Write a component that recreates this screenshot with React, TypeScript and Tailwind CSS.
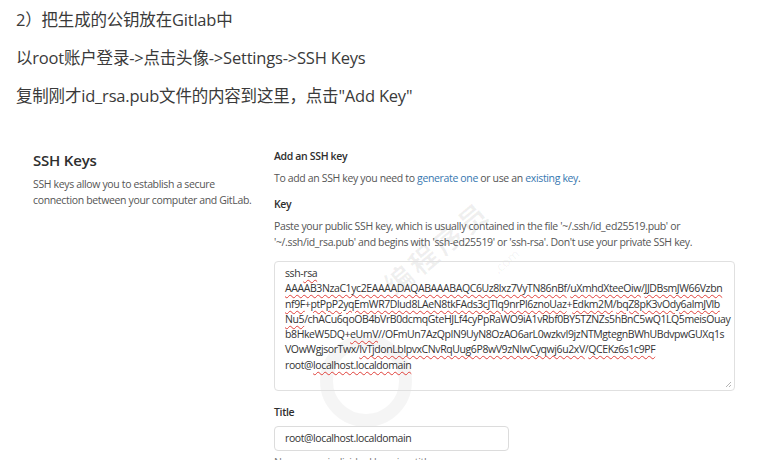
import React from "react";

const W = ({ children }: { children: React.ReactNode }) => (
  <span className="underline decoration-wavy decoration-[#e0403a] decoration-[1px] underline-offset-[2px]">{children}</span>
);

export default function App() {
  return (
    <div className="w-[760px] h-[472px] bg-white overflow-hidden font-['Open_Sans','Noto_Sans_CJK_SC',sans-serif]">
      <div className="h-[460px] overflow-hidden relative">
        <div className="pl-[16px] pt-[1px] text-[16.5px] leading-[38px] tracking-[-0.2px] text-[#3a3a3a]">
          <p>2）把生成的公钥放在Gitlab中</p>
          <p>以root账户登录-&gt;点击头像-&gt;Settings-&gt;SSH Keys</p>
          <p>复制刚才id_rsa.pub文件的内容到这里，点击"Add Key"</p>
        </div>

        {/* watermark */}
        <div className="absolute left-[320px] top-[335px] w-[92px] h-[92px] rounded-full border-[13px] border-[#000]/[0.04] pointer-events-none" />
        <div className="absolute left-[388px] top-[268px] rotate-[-40deg] origin-left text-[28px] font-bold text-[#000]/[0.06] tracking-[4px] whitespace-nowrap pointer-events-none select-none">
          编程序员
        </div>
        <div className="absolute left-[492px] top-[252px] rotate-[-40deg] text-[13px] text-[#000]/[0.06] whitespace-nowrap pointer-events-none select-none">
          .com
        </div>

        <div className="relative flex mt-[33px] tracking-[-0.35px]">
          <div className="pl-[33px] w-[274px] shrink-0">
            <h2 className="text-[15px] leading-[24px] font-semibold text-[#2e2e2e] tracking-[-0.2px]">SSH Keys</h2>
            <p className="text-[10.5px] leading-[16px] text-[#555] mt-[4px] whitespace-nowrap">
              SSH keys allow you to establish a secure
              <br />
              connection between your computer and GitLab.
            </p>
          </div>
          <div className="w-[461px] text-[10.5px] text-[#555]">
            <div className="font-semibold text-[#2e2e2e] leading-[16px]">Add an SSH key</div>
            <div className="leading-[16px] mt-[6px]">
              To add an SSH key you need to <span className="text-[#3777b0]">generate one</span> or use an{" "}
              <span className="text-[#3777b0]">existing key</span>.
            </div>
            <div className="font-semibold text-[#2e2e2e] leading-[16px] mt-[10px]">Key</div>
            <div className="leading-[16px] mt-[6px] whitespace-nowrap">
              Paste your public SSH key, which is usually contained in the file '~/.ssh/id_ed25519.pub' or
              <br />
              '~/.ssh/id_rsa.pub' and begins with 'ssh-ed25519' or 'ssh-rsa'. Don't use your private SSH key.
            </div>
            <div className="relative mt-[11px] h-[130px] border border-[#e0e0e0] rounded-[4px] px-[10px] pt-[4px] text-[10.5px] tracking-[-0.4px] leading-[15.3px] text-[#333] whitespace-nowrap overflow-hidden">
              <div>ssh-<W>rsa</W></div>
              <div><W>AAAAB3NzaC1yc2EAAAADAQABAAABAQC6Uz8lxz7VyTN86nBf</W>/<W>uXmhdXteeOiw</W>/<W>JJDBsmJW66Vzbn</W></div>
              <div><W>nf9F</W>+<W>ptPpP2yqEmWR7Dlud8LAeN8tkFAds3cJTlq9nrPl6znoUaz</W>+<W>Edkm2M</W>/<W>bqZ8pK3vOdy6almJVlb</W></div>
              <div><W>Nu5</W>/chACu6qoOB4bVrB0dcmqGteHJLf4cyPpRaWO9iA1vRbf0BY5TZNZs5hBnC5wQ1LQ5meisOuay</div>
              <div>b8HkeW5DQ+<W>eUmV</W>//OFmUn7AzQpIN9UyN8OzAO6arL0wzkvI9jzNTMgtegnBWhUBdvpwGUXq1s</div>
              <div>VOwWgjsorTwx/<W>IvTjdonLblpvxCNvRqUug6P8wV9zNIwCyqwj6u2xV</W>/<W>QCEKz6s1c9PF</W></div>
              <div>root@<W>localhost.localdomain</W></div>
              <svg className="absolute right-[2px] bottom-[2px]" width="7" height="7" viewBox="0 0 7 7">
                <path d="M6 1 L1 6 M6 4 L4 6" stroke="#b5b5b5" strokeWidth="1" />
              </svg>
            </div>
            <div className="font-semibold text-[#2e2e2e] leading-[16px] mt-[13px]">Title</div>
            <div className="mt-[6px] w-[235px] h-[25px] border border-[#dcdcdc] rounded-[4px] px-[10px] flex items-center text-[10.5px] tracking-[-0.4px] text-[#333] bg-white">
              root@localhost.localdomain
            </div>
            <div className="leading-[16px] mt-[3px] text-[#777]">Name your individual key via a title</div>
          </div>
        </div>
      </div>
    </div>
  );
}
